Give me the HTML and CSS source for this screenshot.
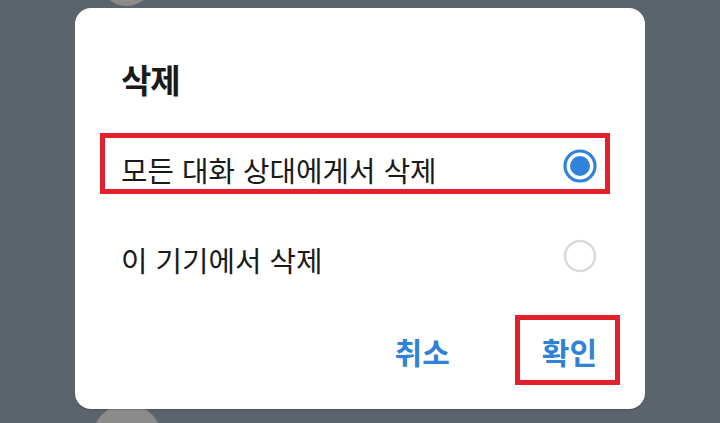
FILE: index.html
```html
<!DOCTYPE html>
<html lang="ko">
<head>
<meta charset="utf-8">
<link rel="stylesheet" href="styles.css">
</head>
<body>
<div class="stage">
  <div class="bg-circle top"></div>
  <div class="bg-circle bottom"></div>
  <div class="dialog">
    <h1 class="title">삭제</h1>
    <div class="options">
      <div class="option">
        <span class="label">모든 대화 상대에게서 삭제</span>
        <svg class="radio" width="34" height="34" viewBox="0 0 34 34"><circle cx="17" cy="17" r="15" fill="none" stroke="#2f83d8" stroke-width="3.2"/><circle cx="17" cy="17" r="10" fill="#2f83d8"/></svg>
      </div>
      <div class="option">
        <span class="label">이 기기에서 삭제</span>
        <svg class="radio" width="34" height="34" viewBox="0 0 34 34"><circle cx="17" cy="17" r="15" fill="none" stroke="#dadada" stroke-width="2.6"/></svg>
      </div>
    </div>
    <div class="actions">
      <span class="btn">취소</span>
      <span class="btn">확인</span>
    </div>
    <div class="mark mark-option"></div>
    <div class="mark mark-ok"></div>
  </div>
</div>
</body>
</html>
```
FILE: styles.css
```css
html, body {
  margin: 0;
  padding: 0;
  overflow: hidden;
}
body {
  font-family: "Noto Sans CJK KR", "Noto Sans", sans-serif;
}
.stage {
  position: relative;
  width: 720px;
  height: 423px;
  overflow: hidden;
  background: #5b646c;
  padding-top: 8px;
  box-sizing: border-box;
}
.bg-circle {
  position: absolute;
  background: #8b8b8b;
  border-radius: 50%;
}
.bg-circle.top {
  left: 100px;
  top: -47px;
  width: 53px;
  height: 53px;
}
.bg-circle.bottom {
  left: 92px;
  top: 404px;
  width: 70px;
  height: 70px;
}
.dialog {
  position: relative;
  margin-left: 75px;
  width: 570px;
  height: 401px;
  background: #fff;
  border-radius: 16px;
  box-sizing: border-box;
  display: flex;
  flex-direction: column;
  box-shadow: 0 1px 2px rgba(0,0,0,0.15);
}
.title {
  margin: 51px 0 22px 46px;
  height: 40px;
  line-height: 40px;
  font-size: 33px;
  font-weight: 700;
  color: #1a1a1a;
  letter-spacing: -1px;
}
.options {
  display: flex;
  flex-direction: column;
}
.option {
  height: 90px;
  display: flex;
  align-items: center;
  justify-content: space-between;
  padding: 0 48px 0 46px;
}
.label {
  font-size: 28.8px;
  color: #1a1a1a;
  position: relative;
  top: 3px;
}
.radio {
  display: block;
}
.actions {
  display: flex;
  justify-content: flex-end;
  align-items: center;
  gap: 92px;
  padding: 0 48px 0 0;
  height: 70px;
  margin-top: 15px;
}
.btn {
  font-size: 30px;
  font-weight: 700;
  color: #2f82d4;
}
.mark {
  position: absolute;
  border: 5px solid #e3202c;
  box-sizing: border-box;
}
.mark-option {
  left: 25px;
  top: 125px;
  width: 510px;
  height: 61px;
}
.mark-ok {
  left: 440px;
  top: 307px;
  width: 105px;
  height: 70px;
}
```
